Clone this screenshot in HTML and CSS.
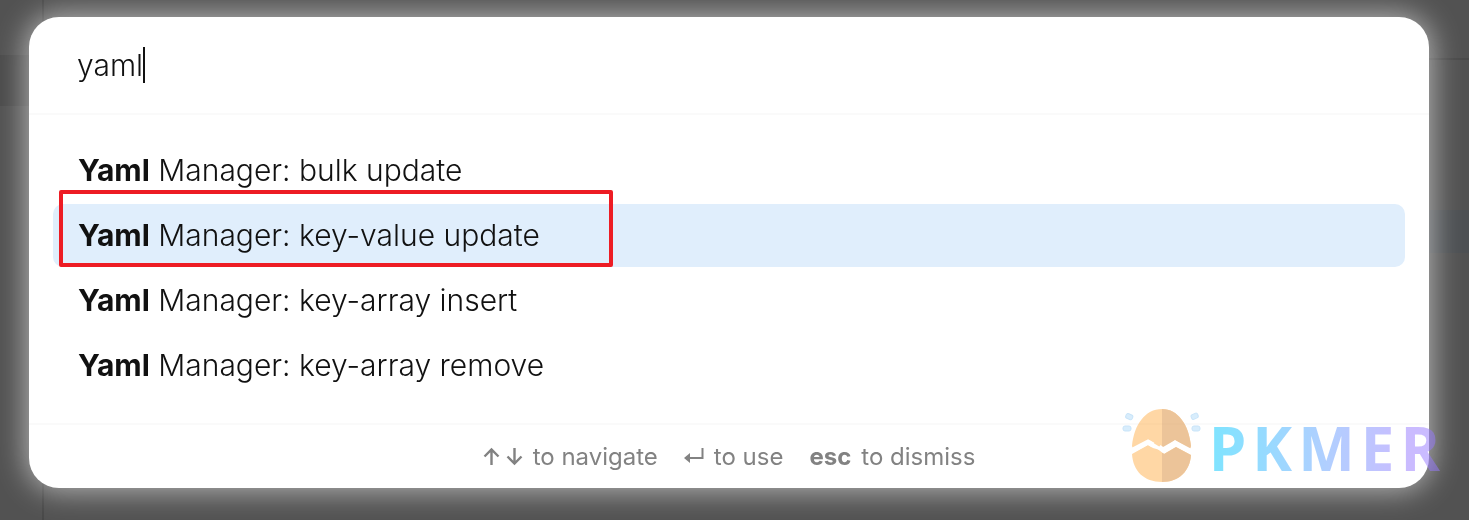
FILE: index.html
```html
<!DOCTYPE html>
<html lang="en">
<head>
  <meta charset="UTF-8">
  <title>Command palette</title>
  <meta name="viewport" content="width=device-width, initial-scale=1.0">
  <link rel="stylesheet" href="styles.css">
</head>
<body>
  <!-- dimmed app behind the palette -->
  <div class="backdrop">
    <div class="side"><div class="side-tab"></div></div>
    <div class="main"><div class="main-head"></div><div class="main-row"></div></div>
  </div>

  <div class="prompt">
    <div class="search">
      <input class="search-input" type="text" value="yaml" aria-label="Search commands"><span class="caret"></span>
    </div>

    <div class="results">
      <button class="item" type="button"><b>Yaml</b> Manager: bulk update</button>
      <button class="item selected" type="button"><b>Yaml</b> Manager: key-value update<span class="marker"></span></button>
      <button class="item" type="button"><b>Yaml</b> Manager: key-array insert</button>
      <button class="item" type="button"><b>Yaml</b> Manager: key-array remove</button>
    </div>

    <div class="help">
      <div class="hint">
        <svg class="arrows" width="40" height="20" viewBox="0 0 40 20" fill="none" stroke="currentColor" stroke-width="2.4">
          <path d="M8.500 18V2.500M1.500 9.500L8.500 2.500L15.500 9.500M31.500 1V16.500M24.500 9.500L31.500 16.500L38.500 9.500"/>
        </svg>
        <span>to navigate</span>
      </div>
      <div class="hint">
        <svg class="enter" width="20" height="20" viewBox="0 0 20 20">
          <path d="M3 11H18.500V1" fill="none" stroke="currentColor" stroke-width="2"/>
          <path d="M0 11L6 6V16Z" fill="currentColor"/>
        </svg>
        <span>to use</span>
      </div>
      <div class="hint"><b>esc</b><span>to dismiss</span></div>
    </div>

    <div class="watermark">
      <svg width="80" height="76" viewBox="0 0 80 76">
        <path d="M11 39C13 18 24 2 41 2C57 2 68 18 70 39L69 42L54 33L43 41L39 40L34 37L28 33L12 42Z" fill="#ffb04d"/>
        <path d="M41 2C57 2 68 18 70 39L69 42L54 33L43 41L41 40Z" fill="#db8b36"/>
        <path d="M11 47L27 38L32 41L39 43L43 47L55 40L70 48C69 64 58 75 41 75C23 75 12 64 11 47Z" fill="#ffb04d"/>
        <path d="M41 45L43 47L55 40L70 48C69 64 58 75 41 75Z" fill="#db8b36"/>
        <path d="M10 44L27 35L32 38M38 40L42 43L54 36L71 45" fill="none" stroke="#fff" stroke-width="5"/>
        <g fill="#b3dcfa" stroke="#93c9f2" stroke-width="1">
          <rect x="5" y="7" width="7" height="5" rx="2" transform="rotate(25 8 9)"/>
          <rect x="2" y="19" width="8" height="5" rx="2"/>
          <rect x="70" y="7" width="7" height="5" rx="2" transform="rotate(-25 73 9)"/>
          <rect x="71" y="19" width="8" height="5" rx="2"/>
        </g>
      </svg>
      <span class="brand">PKMER</span>
    </div>
  </div>
</body>
</html>
```

FILE: styles.css
```css
* { box-sizing: border-box; }
body {
  margin: 0;
  padding: 17px 40px 32px 29px;
  min-height: 100vh;
  background: #525252;
  font-family: Inter, "Liberation Sans", sans-serif;
  font-weight: 300;
  color: #111;
}

.backdrop { position: fixed; inset: 0; display: flex; }
.side { width: 44px; border-right: 2px solid #484848; }
.side-tab { margin-top: 55px; height: 51px; background: #4b4b4b; }
.main { flex: 1; }
.main-head { height: 60px; border-bottom: 2px solid #4a4a4a; }
.main-row { margin-top: 150px; height: 43px; background: #4d5053; }

.prompt {
  position: relative;
  background: #fff;
  border-radius: 30px;
  box-shadow: 0 0 30px 2px rgba(255, 255, 255, 0.6);
}

.search { display: flex; align-items: center; height: 98px; padding: 0 48px; border-bottom: 2px solid #fafafa; }
.search-input {
  field-sizing: content;
  padding: 0;
  border: 0;
  outline: 0;
  background: none;
  font: inherit;
  font-size: 30px;
  line-height: 36px;
  color: inherit;
}
.caret { width: 2px; height: 36px; background: #111; }

.results { display: flex; flex-direction: column; gap: 2px; padding: 24px 24px 26px; }
.item {
  position: relative;
  padding: 0 25px;
  border: 0;
  border-radius: 10px;
  background: none;
  font: inherit;
  font-size: 30px;
  line-height: 63px;
  text-align: left;
  color: inherit;
}
.item b { font-weight: 700; }
.item.selected { background: #e0eefc; }
.marker {
  position: absolute;
  top: -14px;
  left: 6px;
  width: 554px;
  height: 77px;
  border: 4px solid #ed1c24;
  border-radius: 2px;
}

.help {
  display: flex;
  justify-content: center;
  gap: 26px;
  padding: 16px 0;
  border-top: 2px solid #fafafa;
  font-size: 24px;
  font-weight: 400;
  line-height: 31px;
  color: #828282;
}
.hint { display: flex; align-items: center; gap: 10px; }
.hint b { font-weight: 700; }

.watermark {
  position: absolute;
  right: -17px;
  bottom: -1px;
  display: flex;
  align-items: flex-start;
  gap: 8px;
  opacity: 0.5;
}
.brand {
  font-family: "Open Sans", "Noto Sans", sans-serif;
  font-weight: 700;
  font-size: 60px;
  line-height: 82px;
  letter-spacing: 6px;
  color: transparent;
  background: linear-gradient(90deg, #00cbff, #66a0ff 50%, #9779ff 85%);
  background-clip: text;
}
```
